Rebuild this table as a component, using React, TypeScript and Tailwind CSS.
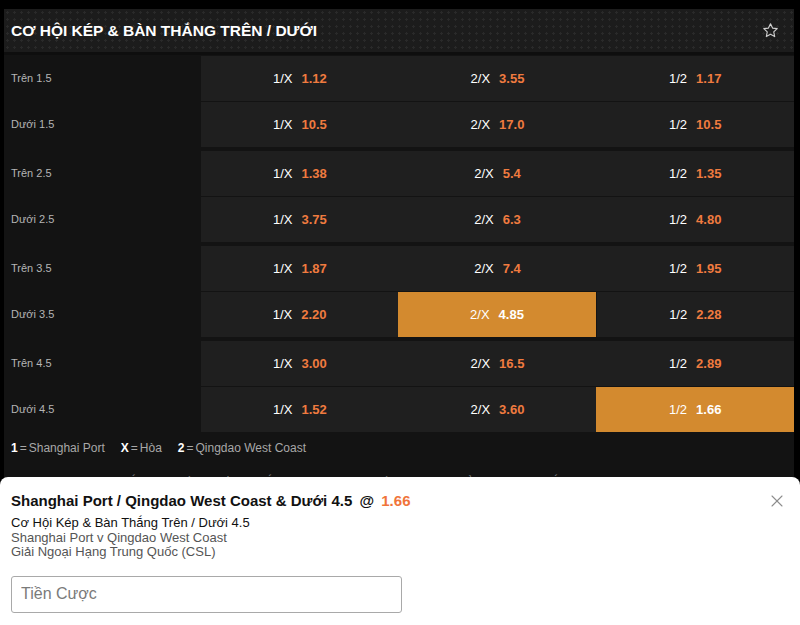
import { X } from 'lucide-react';

type Pick = { code: string; odds: string };

interface OddsRow {
  label: string;
  picks: Pick[];
}

const rows: OddsRow[] = [
  { label: 'Trên 1.5', picks: [{ code: '1/X', odds: '1.12' }, { code: '2/X', odds: '3.55' }, { code: '1/2', odds: '1.17' }] },
  { label: 'Dưới 1.5', picks: [{ code: '1/X', odds: '10.5' }, { code: '2/X', odds: '17.0' }, { code: '1/2', odds: '10.5' }] },
  { label: 'Trên 2.5', picks: [{ code: '1/X', odds: '1.38' }, { code: '2/X', odds: '5.4' }, { code: '1/2', odds: '1.35' }] },
  { label: 'Dưới 2.5', picks: [{ code: '1/X', odds: '3.75' }, { code: '2/X', odds: '6.3' }, { code: '1/2', odds: '4.80' }] },
  { label: 'Trên 3.5', picks: [{ code: '1/X', odds: '1.87' }, { code: '2/X', odds: '7.4' }, { code: '1/2', odds: '1.95' }] },
  { label: 'Dưới 3.5', picks: [{ code: '1/X', odds: '2.20' }, { code: '2/X', odds: '4.85' }, { code: '1/2', odds: '2.28' }] },
  { label: 'Trên 4.5', picks: [{ code: '1/X', odds: '3.00' }, { code: '2/X', odds: '16.5' }, { code: '1/2', odds: '2.89' }] },
  { label: 'Dưới 4.5', picks: [{ code: '1/X', odds: '1.52' }, { code: '2/X', odds: '3.60' }, { code: '1/2', odds: '1.66' }] },
];

// cells that are selected in the bet slip
const selected = ['Dưới 3.5|2/X', 'Dưới 4.5|1/2'];

function StarIcon() {
  return (
    <svg width="17" height="17" viewBox="0 0 24 24" fill="none" stroke="#cfcfcf" strokeWidth="1.6" strokeLinejoin="round">
      <polygon points="12 2.5 14.9 8.6 21.5 9.4 16.6 14 17.9 20.6 12 17.4 6.1 20.6 7.4 14 2.5 9.4 9.1 8.6" />
    </svg>
  );
}

function Cell({ row, pick, last }: { row: string; pick: Pick; last: boolean }) {
  const active = selected.includes(`${row}|${pick.code}`);
  return (
    <div
      className={`flex-1 flex items-center justify-center gap-[9px] text-[13px] ${
        active ? 'bg-[#d38a2f]' : 'bg-[#1f1f1f]'
      } ${active && !last ? 'border-r border-[#141414]' : ''}`}
    >
      <span className="text-white">{pick.code}</span>
      <span className={`font-bold ${active ? 'text-white' : 'text-[#f07b3f]'}`}>{pick.odds}</span>
    </div>
  );
}

export default function App() {
  const pairs = [0, 2, 4, 6].map((i) => rows.slice(i, i + 2));

  return (
    <div
      className="relative h-[625px] overflow-hidden bg-black pt-[9px] pl-1 pr-[6px]"
      style={{ fontFamily: '"Liberation Sans", Arial, sans-serif' }}
    >
      <div className="bg-[#131313]">
        {/* Header */}
        <div className="h-[46px] flex items-center justify-between pl-[7px] pr-[15px] bg-[#1c1c1c] bg-[radial-gradient(#2a2a2a_1.2px,transparent_1.3px)] bg-[length:7px_7px] border-b-[3px] border-[#0e0e0e]">
          <h2 className="text-white font-bold text-[15.5px]">CƠ HỘI KÉP &amp; BÀN THẮNG TRÊN / DƯỚI</h2>
          <StarIcon />
        </div>

        {/* Odds table */}
        <div className="pt-[1px] flex flex-col gap-[4px]">
          {pairs.map((pair, pi) => (
            <div key={pi} className="flex flex-col gap-[1px]">
              {pair.map((r) => (
                <div key={r.label} className="flex h-[45px]">
                  <div className="w-[197px] flex items-center pl-[7px] text-[11px] text-[#b5b5b5]">{r.label}</div>
                  <div className="flex-1 flex">
                    {r.picks.map((p, i) => (
                      <Cell key={p.code} row={r.label} pick={p} last={i === r.picks.length - 1} />
                    ))}
                  </div>
                </div>
              ))}
            </div>
          ))}
        </div>

        {/* Legend */}
        <div className="pl-[7px] pt-[7px] text-[12px] text-[#a8a8a8] flex gap-[16px]">
          <span><b className="text-white">1</b><span className="mx-[2px]">=</span>Shanghai Port</span>
          <span><b className="text-white">X</b><span className="mx-[2px]">=</span>Hòa</span>
          <span><b className="text-white">2</b><span className="mx-[2px]">=</span>Qingdao West Coast</span>
        </div>
        <p className="pl-[7px] pt-[16px] pb-6 text-[12px] text-[#8a8a8a]">
          Dự đoán đội nào sẽ thắng trận đấu và số bàn thắng. Cả hai dự đoán đều phải đúng để tính là cược thắng.
        </p>
      </div>

      {/* Bet slip bottom sheet */}
      <div className="absolute left-0 right-0 bottom-0 h-[148px] bg-white rounded-t-[8px] pl-[11px] pr-[13px] pt-[15px]">
        <div className="flex items-start justify-between">
          <div className="text-[15px] font-bold text-[#111] leading-[18px]">
            Shanghai Port / Qingdao West Coast &amp; Dưới 4.5 <span className="mx-[3px]">@</span>{' '}
            <span className="text-[#f0743a]">1.66</span>
          </div>
          <X size={20} strokeWidth={1.3} className="text-[#8d8d8d] -mt-[1px]" />
        </div>
        <div className="mt-[5px] text-[13px] leading-[14.5px]">
          <div className="text-[#111]">Cơ Hội Kép &amp; Bàn Thắng Trên / Dưới 4.5</div>
          <div className="text-[#555]">Shanghai Port v Qingdao West Coast</div>
          <div className="text-[#555]">Giải Ngoại Hạng Trung Quốc (CSL)</div>
        </div>
        <input
          placeholder="Tiền Cược"
          className="mt-[16px] w-[391px] h-[37px] border border-[#a9a9a9] rounded-[3px] px-[9px] text-[16px] placeholder:text-[#7a7a7a] outline-none"
        />
      </div>
    </div>
  );
}
